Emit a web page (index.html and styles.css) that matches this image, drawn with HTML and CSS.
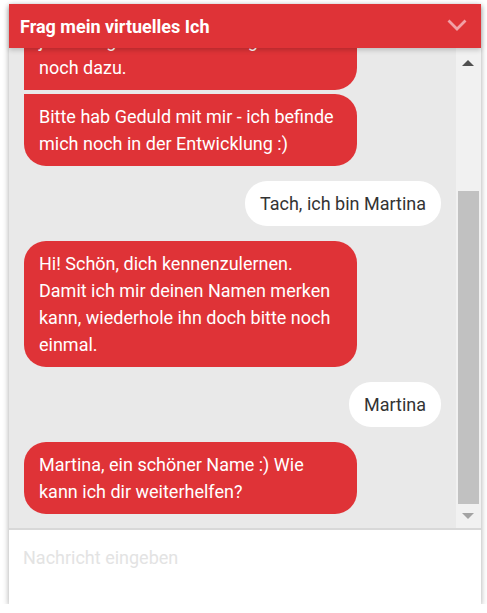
FILE: index.html
```html
<!DOCTYPE html>
<html lang="de">
<head>
<meta charset="utf-8">
<link rel="stylesheet" href="styles.css">
</head>
<body>
<div class="chat">
  <div class="header">
    <span class="title">Frag mein virtuelles Ich</span>
    <svg class="chevron" width="20" height="12" viewBox="0 0 20 12"><polyline points="1.5,1.5 10,10 18.5,1.5" fill="none" stroke="#f2a0a6" stroke-width="2.8"/></svg>
  </div>
  <div class="body">
    <div class="messages">
      <div class="msg bot first">Ich lerne jeden Tag etwas Neues. Und jeden Tag kommt ein wenig Wissen<br>noch dazu.</div>
      <div class="msg bot last">Bitte hab Geduld mit mir - ich befinde mich noch in der Entwicklung :)</div>
      <div class="msg user">Tach, ich bin Martina</div>
      <div class="msg bot">Hi! Schön, dich kennenzulernen. Damit ich mir deinen Namen merken kann, wiederhole ihn doch bitte noch einmal.</div>
      <div class="msg user">Martina</div>
      <div class="msg bot">Martina, ein schöner Name :) Wie kann ich dir weiterhelfen?</div>
    </div>
    <div class="scrollbar">
      <div class="sb-btn"><span class="arrow-up"></span></div>
      <div class="sb-space"></div>
      <div class="sb-thumb"></div>
      <div class="sb-btn down"><span class="arrow-down"></span></div>
    </div>
  </div>
  <div class="input">Nachricht eingeben</div>
</div>
</body>
</html>
```
FILE: styles.css
```css
html, body {
  margin: 0;
  padding: 0;
  background: #ffffff;
}
body {
  font-family: Roboto, "Liberation Sans", sans-serif;
}
.chat {
  margin: 4px 0 0 9px;
  width: 472px;
  height: 600px;
  display: flex;
  flex-direction: column;
  background: #fff;
  box-shadow: 0 2px 6px rgba(0,0,0,0.35);
}
.header {
  position: relative;
  z-index: 2;
  height: 44px;
  flex: none;
  background: #df3337;
  display: flex;
  align-items: center;
  justify-content: space-between;
  padding: 0 14px 0 11px;
  box-shadow: 0 2px 5px rgba(0,0,0,0.2);
}
.title {
  color: #fff;
  font-weight: 700;
  font-size: 18px;
}
.chevron {
  display: block;
  margin-top: -3px;
}
.body {
  height: 480px;
  flex: none;
  display: flex;
  background: #e9e9e9;
  border-bottom: 2px solid #d8d8d8;
}
.messages {
  flex: 1;
  overflow: hidden;
  display: flex;
  flex-direction: column;
  justify-content: flex-end;
  padding: 0 15px 14px 15px;
}
.msg {
  flex: none;
  font-size: 18px;
  line-height: 27px;
  padding: 9px 15px;
  border-radius: 22px;
  max-width: 303px;
  margin-top: 15px;
}
.bot {
  align-self: flex-start;
  width: 303px;
  background: #df3337;
  color: #fff;
}
.bot.first {
  border-bottom-left-radius: 0;
  margin-top: 0;
}
.bot.last {
  border-top-left-radius: 0;
  margin-top: 4px;
}
.user {
  align-self: flex-end;
  background: #fff;
  color: #333;
}
.scrollbar {
  width: 25px;
  flex: none;
  background: #f1f1f1;
  display: flex;
  flex-direction: column;
}
.sb-btn {
  height: 30px;
  display: flex;
  align-items: center;
  justify-content: center;
  flex: none;
}
.sb-btn.down {
  height: 24px;
  align-items: flex-start;
}
.sb-btn.down .arrow-down {
  margin-top: 9px;
}
.arrow-up {
  width: 0;
  height: 0;
  border-left: 6px solid transparent;
  border-right: 6px solid transparent;
  border-bottom: 6px solid #505050;
  margin-left: -1px;
}
.arrow-down {
  width: 0;
  height: 0;
  border-left: 6px solid transparent;
  border-right: 6px solid transparent;
  border-top: 6px solid #a3a3a3;
  margin-left: -1px;
}
.sb-space {
  height: 113px;
  flex: none;
}
.sb-thumb {
  height: 313px;
  flex: none;
  margin: 0 2px;
  background: #c1c1c1;
}
.input {
  flex: 1;
  padding: 17px 14px 0 14px;
  font-size: 18px;
  color: #e3e3e3;
}
```
